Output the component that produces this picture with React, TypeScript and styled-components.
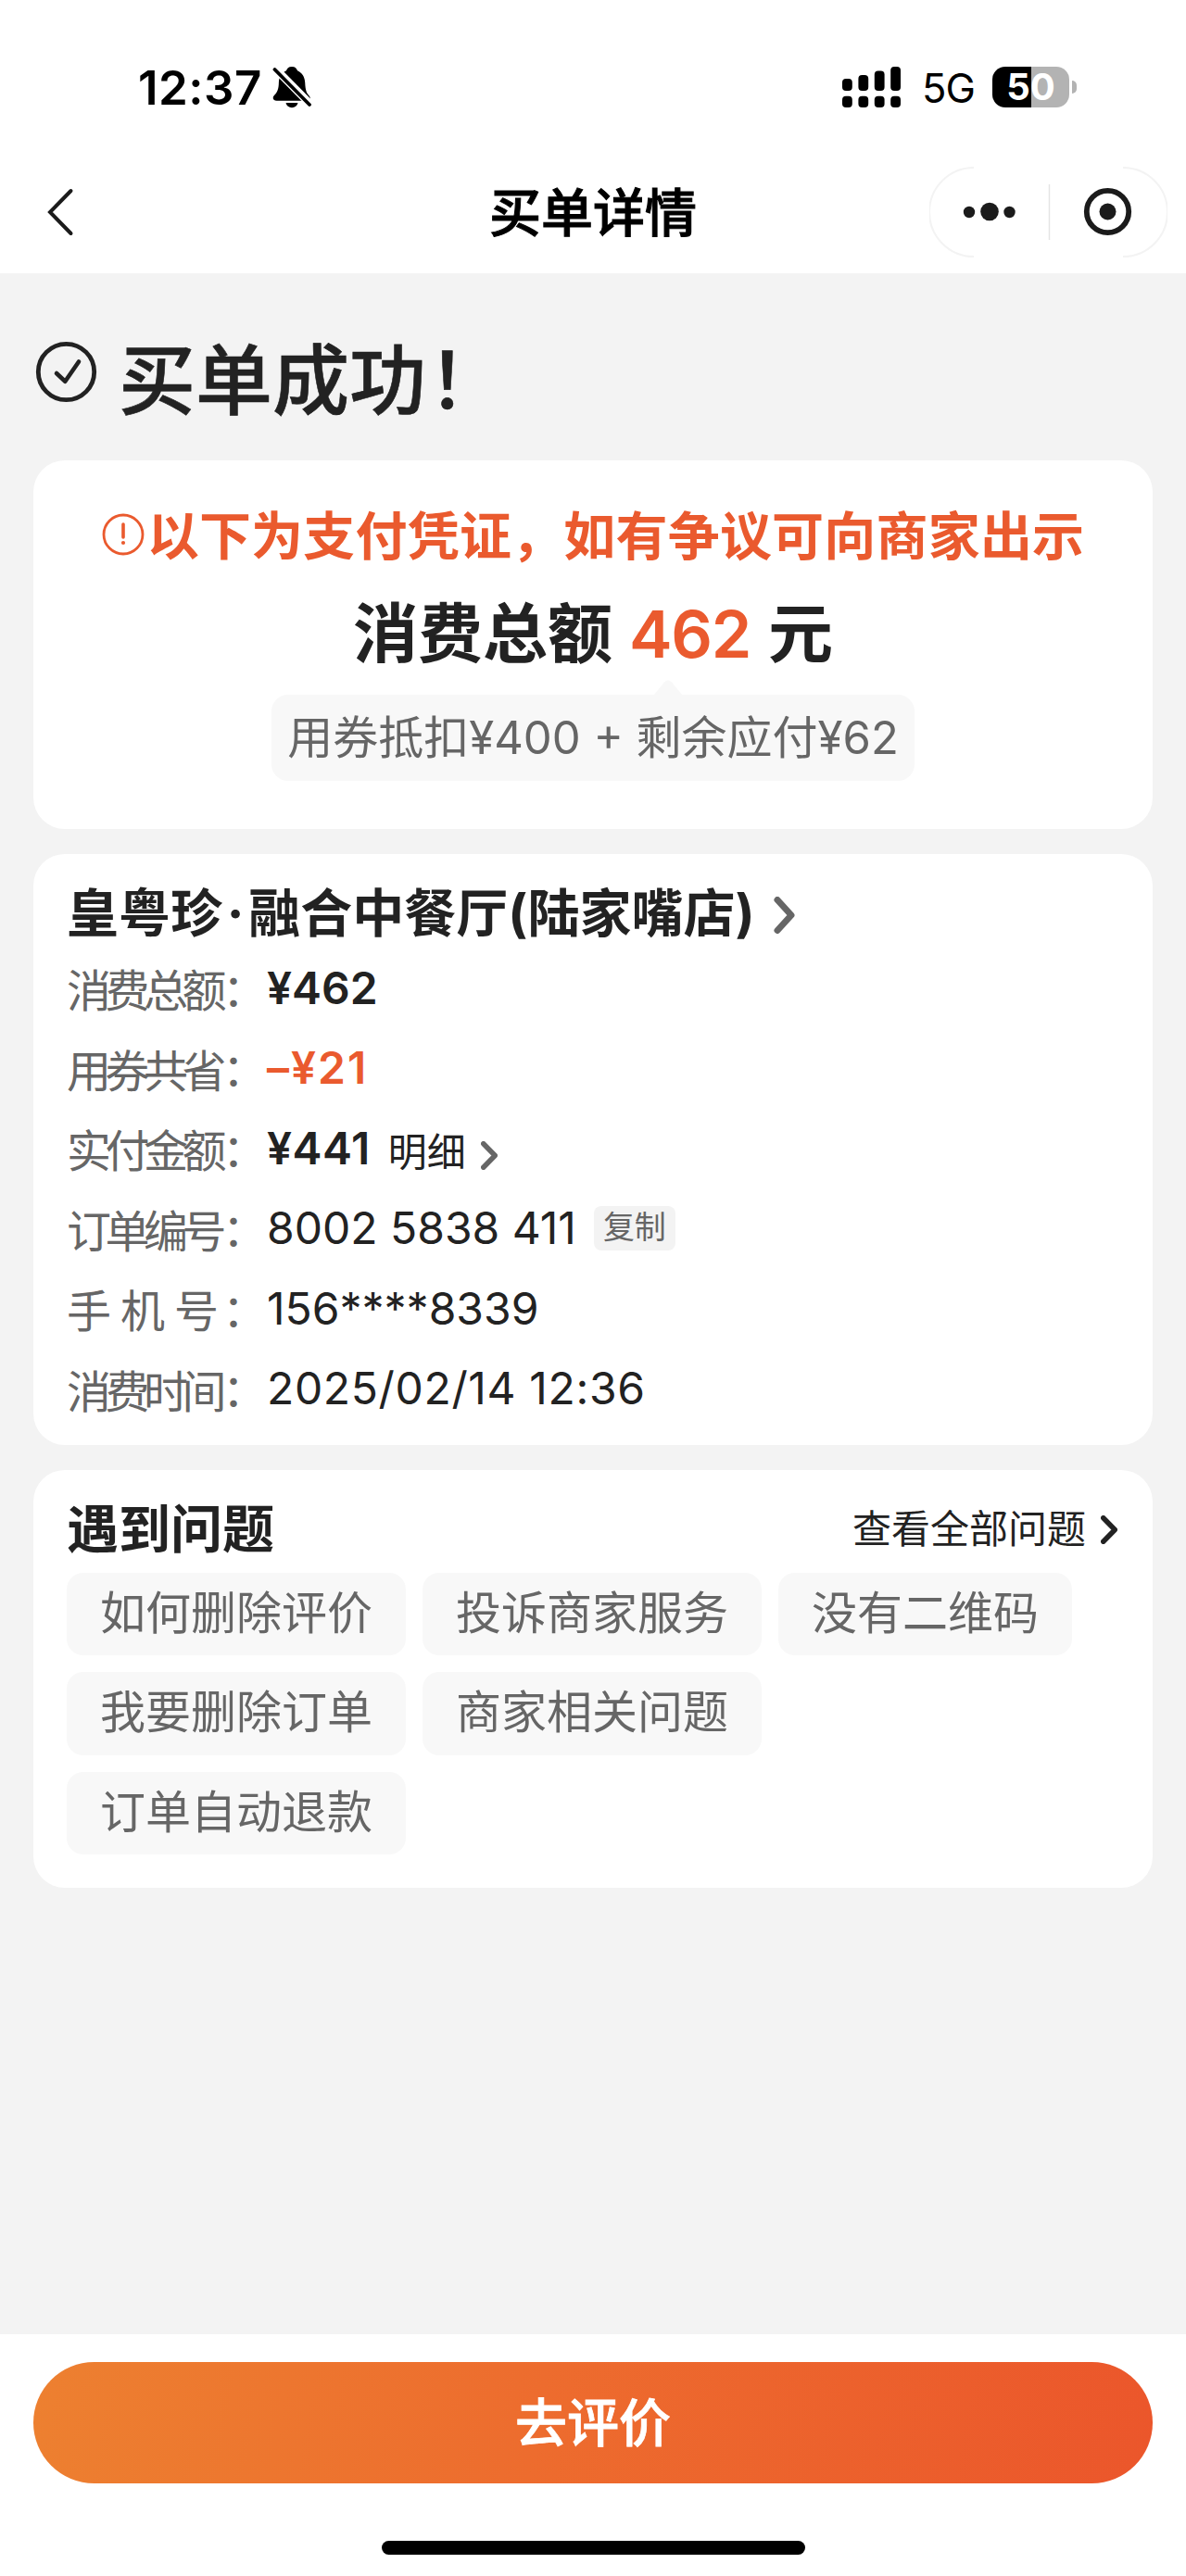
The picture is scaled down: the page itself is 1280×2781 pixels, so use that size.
import React from "react";
import styled, { createGlobalStyle } from "styled-components";

const INK = "#222222";
const MUTED = "#666666";
const ACCENT = "#ea5a2e";

const GlobalStyle = createGlobalStyle`
  * { box-sizing: border-box; }
  body { margin: 0; background: #f3f3f3; }
`;

const Screen = styled.div`
  width: 1280px;
  height: 2781px;
  display: flex;
  flex-direction: column;
  background: #f3f3f3;
  color: ${INK};
  font-family: Inter, "Noto Sans CJK SC", sans-serif;
  white-space: nowrap;
  overflow: hidden;
`;

const Header = styled.header`
  height: 295px;
  flex: none;
  display: flex;
  flex-direction: column;
  background: #fff;
`;

const StatusBar = styled.div`
  height: 162px;
  padding: 26px 118px 0 149px;
  display: flex;
  align-items: center;
  justify-content: space-between;
  color: #000;
`;

const StatusGroup = styled.div<{ $gap: number }>`
  display: flex;
  align-items: center;
  gap: ${(p) => p.$gap}px;
`;

const Clock = styled.span`
  font-size: 51px;
  font-weight: 600;
  letter-spacing: 0.5px;
  line-height: 60px;
  width: 134px;
  padding-top: 1px;
`;

const Network = styled.span`
  font-size: 43.5px;
  line-height: 50px;
  letter-spacing: -1px;
  width: 54px;
  padding-top: 2px;
`;

const Battery = styled.div`
  display: flex;
  align-items: center;
  gap: 3px;
`;

const BatteryBody = styled.div`
  width: 83px;
  height: 44px;
  border-radius: 14px;
  background: linear-gradient(90deg, #000 50%, #b3b3b3 50%);
  color: #fff;
  font-size: 40px;
  font-weight: 700;
  line-height: 44px;
  text-align: center;
`;

const BatteryTip = styled.div`
  width: 5px;
  height: 14px;
  border-radius: 0 5px 5px 0;
  background: #b3b3b3;
`;

const NavBar = styled.div`
  height: 133px;
  padding: 0 20px 0 50px;
  display: grid;
  grid-template-columns: 257px 1fr 257px;
  align-items: center;
`;

const NavTitle = styled.h1`
  margin: 0 30px 0 0;
  color: #000;
  font-size: 56px;
  line-height: 72px;
  font-weight: 500;
  -webkit-text-stroke: 1px #000;
  text-align: center;
  padding-top: 2px;
`;

const Content = styled.main`
  flex: 1;
  padding: 0 36px;
  display: flex;
  flex-direction: column;
`;

const SuccessRow = styled.div`
  height: 202px;
  padding: 30px 0 0 2px;
  display: flex;
  align-items: center;
  gap: 23px;
`;

const SuccessIcon = styled.svg`
  margin-top: -20px;
`;

const SuccessText = styled.h2`
  margin: 0;
  font-size: 83px;
  line-height: 110px;
  font-weight: 500;
  -webkit-text-stroke: 0.6px ${INK};
`;

const Bang = styled.span`
  margin-left: 2px;
`;

const Card = styled.section<{ $height: number; $gap?: number }>`
  height: ${(p) => p.$height}px;
  margin-bottom: ${(p) => p.$gap ?? 0}px;
  flex: none;
  border-radius: 34px;
  background: #fff;
`;

const TotalCard = styled(Card)`
  display: flex;
  flex-direction: column;
  align-items: center;
`;

const Notice = styled.div`
  margin-top: 40px;
  height: 80px;
  display: flex;
  align-items: center;
  gap: 3px;
  color: ${ACCENT};
`;

const NoticeText = styled.span`
  padding-bottom: 5px;
  font-size: 56px;
  font-weight: 700;
  letter-spacing: 0.2px;
`;

const Total = styled.div`
  margin-top: 18px;
  height: 100px;
  display: flex;
  align-items: center;
  font-size: 70px;
  line-height: 100px;
  font-weight: 700;
`;

const TotalAmount = styled.strong`
  color: ${ACCENT};
  font-weight: 600;
  letter-spacing: -1.3px;
  margin: 0 19px 0 18px;
`;

const Breakdown = styled.div`
  position: relative;
  margin-top: 15px;
  width: 694px;
  height: 93px;
  border-radius: 18px;
  background: #f8f8f8;
  color: ${MUTED};
  font-size: 49px;
  line-height: 93px;
  text-align: center;
`;

const BreakdownArrow = styled.svg`
  position: absolute;
  left: 412px;
  top: -16px;
`;

const DetailCard = styled(Card)`
  padding: 27px 36px 0;
`;

const ShopName = styled.h3`
  margin: 0;
  height: 78px;
  display: flex;
  align-items: center;
  font-size: 56px;
  font-weight: 700;
`;

const ShopText = styled.span`
  padding-bottom: 14px;
`;

const ShopDot = styled.span`
  margin: 0 4.8px;
`;

const Row = styled.div`
  height: 86.5px;
  display: flex;
  align-items: center;
`;

const Label = styled.span<{ $tracking: number }>`
  width: 165px;
  color: ${MUTED};
  font-size: 48px;
  line-height: 70px;
  letter-spacing: ${(p) => p.$tracking}px;
`;

const Colon = styled.span`
  width: 48px;
  margin: 0 0 3px 3px;
  color: ${MUTED};
  font-size: 48px;
  line-height: 70px;
`;

const Value = styled.span<{ $strong?: boolean; $accent?: boolean; $tracking?: number }>`
  color: ${(p) => (p.$accent ? ACCENT : INK)};
  font-size: 48px;
  line-height: 60px;
  font-weight: ${(p) => (p.$strong ? 600 : 400)};
  letter-spacing: ${(p) => p.$tracking ?? 0}px;
  margin-bottom: 7px;
`;

const DetailLink = styled.span`
  margin: 1px 0 0 19px;
  display: flex;
  align-items: center;
  gap: 16px;
  font-size: 42px;
  line-height: 60px;

  svg {
    margin-top: 8px;
  }
`;

const CopyTag = styled.span`
  margin: 0 0 7px 19px;
  width: 88px;
  height: 48px;
  border-radius: 8px;
  background: #f3f3f3;
  color: ${MUTED};
  font-size: 34px;
  line-height: 46px;
  text-align: center;
`;

const HelpCard = styled(Card)`
  padding: 24px 36px 0;
`;

const HelpHead = styled.div`
  height: 80px;
  display: flex;
  align-items: center;
  justify-content: space-between;
`;

const HelpTitle = styled.h3`
  margin: 0;
  font-size: 56px;
  line-height: 80px;
  font-weight: 700;
`;

const HelpLink = styled.span`
  margin-right: 2px;
  display: flex;
  align-items: center;
  gap: 16px;
  font-size: 42px;
  line-height: 60px;
`;

const Chips = styled.div`
  margin-top: 7px;
  width: 1130px;
  display: flex;
  flex-wrap: wrap;
  gap: 18px;
`;

const Chip = styled.span`
  height: 89.3px;
  padding: 0 36px;
  border-radius: 18px;
  background: #f8f8f8;
  color: ${MUTED};
  font-size: 49px;
  line-height: 87px;
`;

const Footer = styled.footer`
  height: 261px;
  flex: none;
  padding: 30px 36px 0;
  display: flex;
  flex-direction: column;
  align-items: center;
  background: #fff;
`;

const ReviewButton = styled.button`
  width: 100%;
  height: 131px;
  border: 0;
  padding: 0;
  border-radius: 66px;
  background: linear-gradient(100deg, #ed8030 0%, #ed6c2e 45%, #eb562b 100%);
  color: #fff;
  font: 500 56px/130px Inter, "Noto Sans CJK SC", sans-serif;
  -webkit-text-stroke: 0.8px #fff;
`;

const HomeIndicator = styled.div`
  margin-top: 62px;
  width: 457px;
  height: 15px;
  border-radius: 8px;
  background: #000;
`;

const MutedBell = () => (
  <svg width="42" height="46" viewBox="0 0 42 46">
    <path
      d="M21 1c3.600 0 5.300 2.100 6 4.300 5.200 2.300 7.900 7 8.200 12.700.400 8.500 1.600 11.200 4.300 14.200 2.600 3 .900 5.500-2 5.500H4.600c-3.900 0-5-3.200-2.700-5.700 3.400-3.600 4.800-6.300 5-14C7.100 12.400 9.800 7.600 15 5.300 15.700 3.100 17.400 1 21 1z"
      fill="#000"
    />
    <path d="M14.500 40h13c-.700 3.400-3.200 5.200-6.500 5.200s-5.800-1.800-6.500-5.200z" fill="#000" />
    <path d="M2 2L40.500 41" stroke="#fff" strokeWidth="8.500" />
    <path d="M2.500 4L40 42" stroke="#000" strokeWidth="3.800" strokeLinecap="round" />
  </svg>
);

const Signal = () => (
  <svg width="64" height="44" viewBox="0 0 64 44">
    {[13, 9, 4.5, 0].map((top, i) => (
      <g key={top}>
        <rect x={i * 17.4} y={top} width="10.800" height={26 - top} rx="4" />
        <rect x={i * 17.4} y="31.700" width="10.800" height="12.200" rx="4" />
      </g>
    ))}
  </svg>
);

const Chevron = ({ w, h, stroke, color }: { w: number; h: number; stroke: number; color: string }) => {
  const p = stroke / 2;
  return (
    <svg width={w} height={h} viewBox={`0 0 ${w} ${h}`} fill="none">
      <path
        d={`M${p} ${p}L${w - p} ${h / 2}L${p} ${h - p}`}
        stroke={color}
        strokeWidth={stroke}
        strokeLinecap="round"
        strokeLinejoin="round"
      />
    </svg>
  );
};

const Capsule = () => (
  <svg width="257" height="98" viewBox="0 0 257 98" fill="none">
    <path d="M48 1a48 48 0 0 0 0 96M209 1a48 48 0 0 1 0 96" stroke="#f3f3f3" strokeWidth="2" />
    <path d="M129.500 19v60" stroke="#e4e4e4" strokeWidth="1.500" />
    <g fill="#1b1b1b">
      <circle cx="43" cy="49" r="6.200" />
      <circle cx="65" cy="48.500" r="9.800" />
      <circle cx="86.500" cy="49" r="6.200" />
      <circle cx="192.500" cy="48.500" r="9" />
    </g>
    <circle cx="192.500" cy="48.500" r="22.700" stroke="#1b1b1b" strokeWidth="5.800" />
  </svg>
);

const questions = ["如何删除评价", "投诉商家服务", "没有二维码", "我要删除订单", "商家相关问题", "订单自动退款"];

const FieldLabel = ({ text }: { text: string }) => (
  <>
    <Label $tracking={text.length === 4 ? -6.5 : 10}>{text}</Label>
    <Colon>：</Colon>
  </>
);

export default function App() {
  return (
    <>
      <GlobalStyle />
      <Screen>
        <Header>
          <StatusBar>
            <StatusGroup $gap={11}>
              <Clock>12:37</Clock>
              <MutedBell />
            </StatusGroup>
            <StatusGroup $gap={22}>
              <Signal />
              <Network>5G</Network>
              <Battery>
                <BatteryBody>50</BatteryBody>
                <BatteryTip />
              </Battery>
            </StatusGroup>
          </StatusBar>
          <NavBar>
            <svg width="30" height="52" viewBox="0 0 30 52" fill="none">
              <path d="M26.500 3L4 26l22.500 23" stroke="#1b1b1b" strokeWidth="4" strokeLinecap="round" />
            </svg>
            <NavTitle>买单详情</NavTitle>
            <Capsule />
          </NavBar>
        </Header>

        <Content>
          <SuccessRow>
            <SuccessIcon width="67" height="67" viewBox="0 0 67 67" fill="none">
              <circle cx="33.500" cy="33.500" r="30.200" stroke={INK} strokeWidth="4.800" />
              <path
                d="M23 35l9.300 8.700L47 22.500"
                stroke={INK}
                strokeWidth="4.600"
                strokeLinecap="round"
                strokeLinejoin="round"
              />
            </SuccessIcon>
            <SuccessText>
              买单成功<Bang>！</Bang>
            </SuccessText>
          </SuccessRow>

          <TotalCard $height={398} $gap={27}>
            <Notice>
              <svg width="46" height="46" viewBox="0 0 46 46" fill="none">
                <circle cx="23" cy="23" r="21" stroke={ACCENT} strokeWidth="2.800" />
                <path d="M23 12v14" stroke={ACCENT} strokeWidth="3.600" strokeLinecap="round" />
                <circle cx="23" cy="32" r="2.100" fill={ACCENT} />
              </svg>
              <NoticeText>以下为支付凭证，如有争议可向商家出示</NoticeText>
            </Notice>
            <Total>
              消费总额<TotalAmount>462</TotalAmount>元
            </Total>
            <Breakdown>
              <BreakdownArrow width="32" height="17" viewBox="0 0 32 17">
                <path d="M0 17L12 2.500Q16-1.500 20 2.500L32 17z" fill="#f8f8f8" />
              </BreakdownArrow>
              用券抵扣¥400 + 剩余应付¥62
            </Breakdown>
          </TotalCard>

          <DetailCard $height={638} $gap={27}>
            <ShopName>
              <ShopText>
                皇粤珍<ShopDot>·</ShopDot>融合中餐厅(陆家嘴店)
              </ShopText>
              <svg width="43" height="41" viewBox="0 0 43 41" fill="none">
                <path d="M24 3.500l15 16.500L24 36.500" stroke={MUTED} strokeWidth="7" strokeLinecap="round" strokeLinejoin="round" />
              </svg>
            </ShopName>
            <Row>
              <FieldLabel text="消费总额" />
              <Value $strong>¥462</Value>
            </Row>
            <Row>
              <FieldLabel text="用券共省" />
              <Value $strong $accent $tracking={2}>–¥21</Value>
            </Row>
            <Row>
              <FieldLabel text="实付金额" />
              <Value $strong $tracking={0.5}>¥441</Value>
              <DetailLink>
                明细
                <Chevron w={18} h={31} stroke={5.5} color={MUTED} />
              </DetailLink>
            </Row>
            <Row>
              <FieldLabel text="订单编号" />
              <Value>8002 5838 411</Value>
              <CopyTag>复制</CopyTag>
            </Row>
            <Row>
              <FieldLabel text="手机号" />
              <Value>156****8339</Value>
            </Row>
            <Row>
              <FieldLabel text="消费时间" />
              <Value $tracking={0.65}>2025/02/14 12:36</Value>
            </Row>
          </DetailCard>

          <HelpCard $height={451}>
            <HelpHead>
              <HelpTitle>遇到问题</HelpTitle>
              <HelpLink>
                查看全部问题
                <Chevron w={18} h={31} stroke={5.5} color={INK} />
              </HelpLink>
            </HelpHead>
            <Chips>
              {questions.map((q) => (
                <Chip key={q}>{q}</Chip>
              ))}
            </Chips>
          </HelpCard>
        </Content>

        <Footer>
          <ReviewButton>去评价</ReviewButton>
          <HomeIndicator />
        </Footer>
      </Screen>
    </>
  );
}
